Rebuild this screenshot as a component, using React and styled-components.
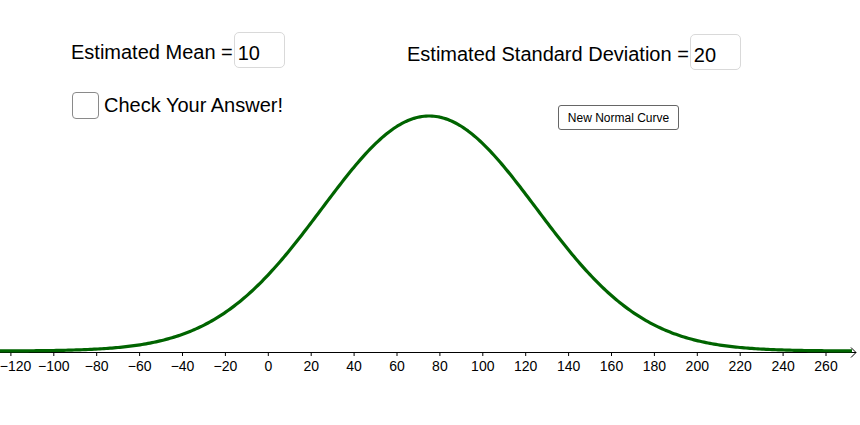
import React from 'react';
import styled, { createGlobalStyle } from 'styled-components';

const GlobalStyle = createGlobalStyle`
  html, body {
    margin: 0;
    padding: 0;
    background: #fff;
  }
  body {
    font-family: 'Liberation Sans', Arial, sans-serif;
  }
`;

// graph coordinates
const ORIGIN_X = 268.3;
const UNIT = 2.145;
const AXIS_Y = 352;
const MEAN = 75;
const SIGMA = 50;
const PEAK = 235;

const Applet = styled.div`
  position: relative;
  width: 860px;
  height: 425px;
  overflow: hidden;
  background: #fff;
  color: #000;
`;

const Canvas = styled.svg`
  display: block;
  width: 860px;
  height: 425px;
`;

const TickLabel = styled.text`
  font-family: 'Liberation Sans', Arial, sans-serif;
  font-size: 14px;
  fill: #000;
`;

const Field = styled.div`
  position: absolute;
  left: ${props => props.x}px;
  top: ${props => props.y}px;
  display: flex;
  align-items: flex-start;
  gap: 1px;
`;

const FieldLabel = styled.span`
  font-size: 20px;
  line-height: 23px;
  padding-top: 9px;
  white-space: nowrap;
`;

const InputBox = styled.div`
  box-sizing: border-box;
  width: ${props => props.w}px;
  height: 36px;
  border: 1px solid #d9d9d9;
  border-radius: 5px;
  padding: 9px 0 0 3px;
  font-size: 20px;
  line-height: 23px;
  background: #fff;
`;

const CheckRow = styled.label`
  position: absolute;
  left: 72px;
  top: 92px;
  display: flex;
  align-items: center;
  gap: 5px;
  cursor: pointer;
`;

const CheckBox = styled.span`
  box-sizing: border-box;
  width: 27px;
  height: 27px;
  border: 1px solid #8a8a8a;
  border-radius: 4px;
  background: #fff;
`;

const CheckText = styled.span`
  font-size: 20px;
  line-height: 23px;
  white-space: nowrap;
`;

const CurveButton = styled.button`
  position: absolute;
  left: 558px;
  top: 105px;
  box-sizing: border-box;
  width: 121px;
  height: 25px;
  padding: 0;
  border: 1px solid #666;
  border-radius: 3px;
  background: #fff;
  font-family: 'Liberation Sans', Arial, sans-serif;
  font-size: 12px;
  color: #000;
  cursor: pointer;
`;

const toPx = v => ORIGIN_X + v * UNIT;

const curvePath = () => {
  const pts = [];
  for (let x = 0; x <= 852; x += 2) {
    const v = (x - ORIGIN_X) / UNIT;
    const y = AXIS_Y - 1 - PEAK * Math.exp(-((v - MEAN) ** 2) / (2 * SIGMA * SIGMA));
    pts.push(`${x},${y.toFixed(2)}`);
  }
  return 'M' + pts.join(' L');
};

const ticks = [];
for (let v = -120; v <= 260; v += 20) ticks.push(v);

const label = v => (v < 0 ? `\u2212${-v}` : `${v}`);

const App = () => (
  <Applet>
    <GlobalStyle />
    <Canvas viewBox="0 0 860 425">
      <line x1="0" y1={AXIS_Y + 0.5} x2="856" y2={AXIS_Y + 0.5} stroke="#000" strokeWidth="1" />
      <path
        d={`M851,${AXIS_Y - 4.5} L856,${AXIS_Y + 0.5} L851,${AXIS_Y + 5.5}`}
        fill="none"
        stroke="#000"
        strokeWidth="1"
      />
      {ticks.map(v => (
        <line
          key={v}
          x1={toPx(v)}
          y1={AXIS_Y}
          x2={toPx(v)}
          y2={AXIS_Y + 4}
          stroke="#000"
          strokeWidth="1"
        />
      ))}
      {ticks.map(v => {
        const w = label(v).length * 7.8;
        const cx = Math.max(toPx(v), w / 2);
        return (
          <TickLabel key={v} x={cx} y={AXIS_Y + 19} textAnchor="middle">
            {label(v)}
          </TickLabel>
        );
      })}
      <path d={curvePath()} fill="none" stroke="#006400" strokeWidth="3.2" strokeLinejoin="round" />
    </Canvas>

    <Field x={71} y={32}>
      <FieldLabel>Estimated Mean =</FieldLabel>
      <InputBox w={51}>10</InputBox>
    </Field>

    <Field x={407} y={34}>
      <FieldLabel>Estimated Standard Deviation =</FieldLabel>
      <InputBox w={51}>20</InputBox>
    </Field>

    <CheckRow>
      <CheckBox />
      <CheckText>Check Your Answer!</CheckText>
    </CheckRow>

    <CurveButton>New Normal Curve</CurveButton>
  </Applet>
);

export default App;
